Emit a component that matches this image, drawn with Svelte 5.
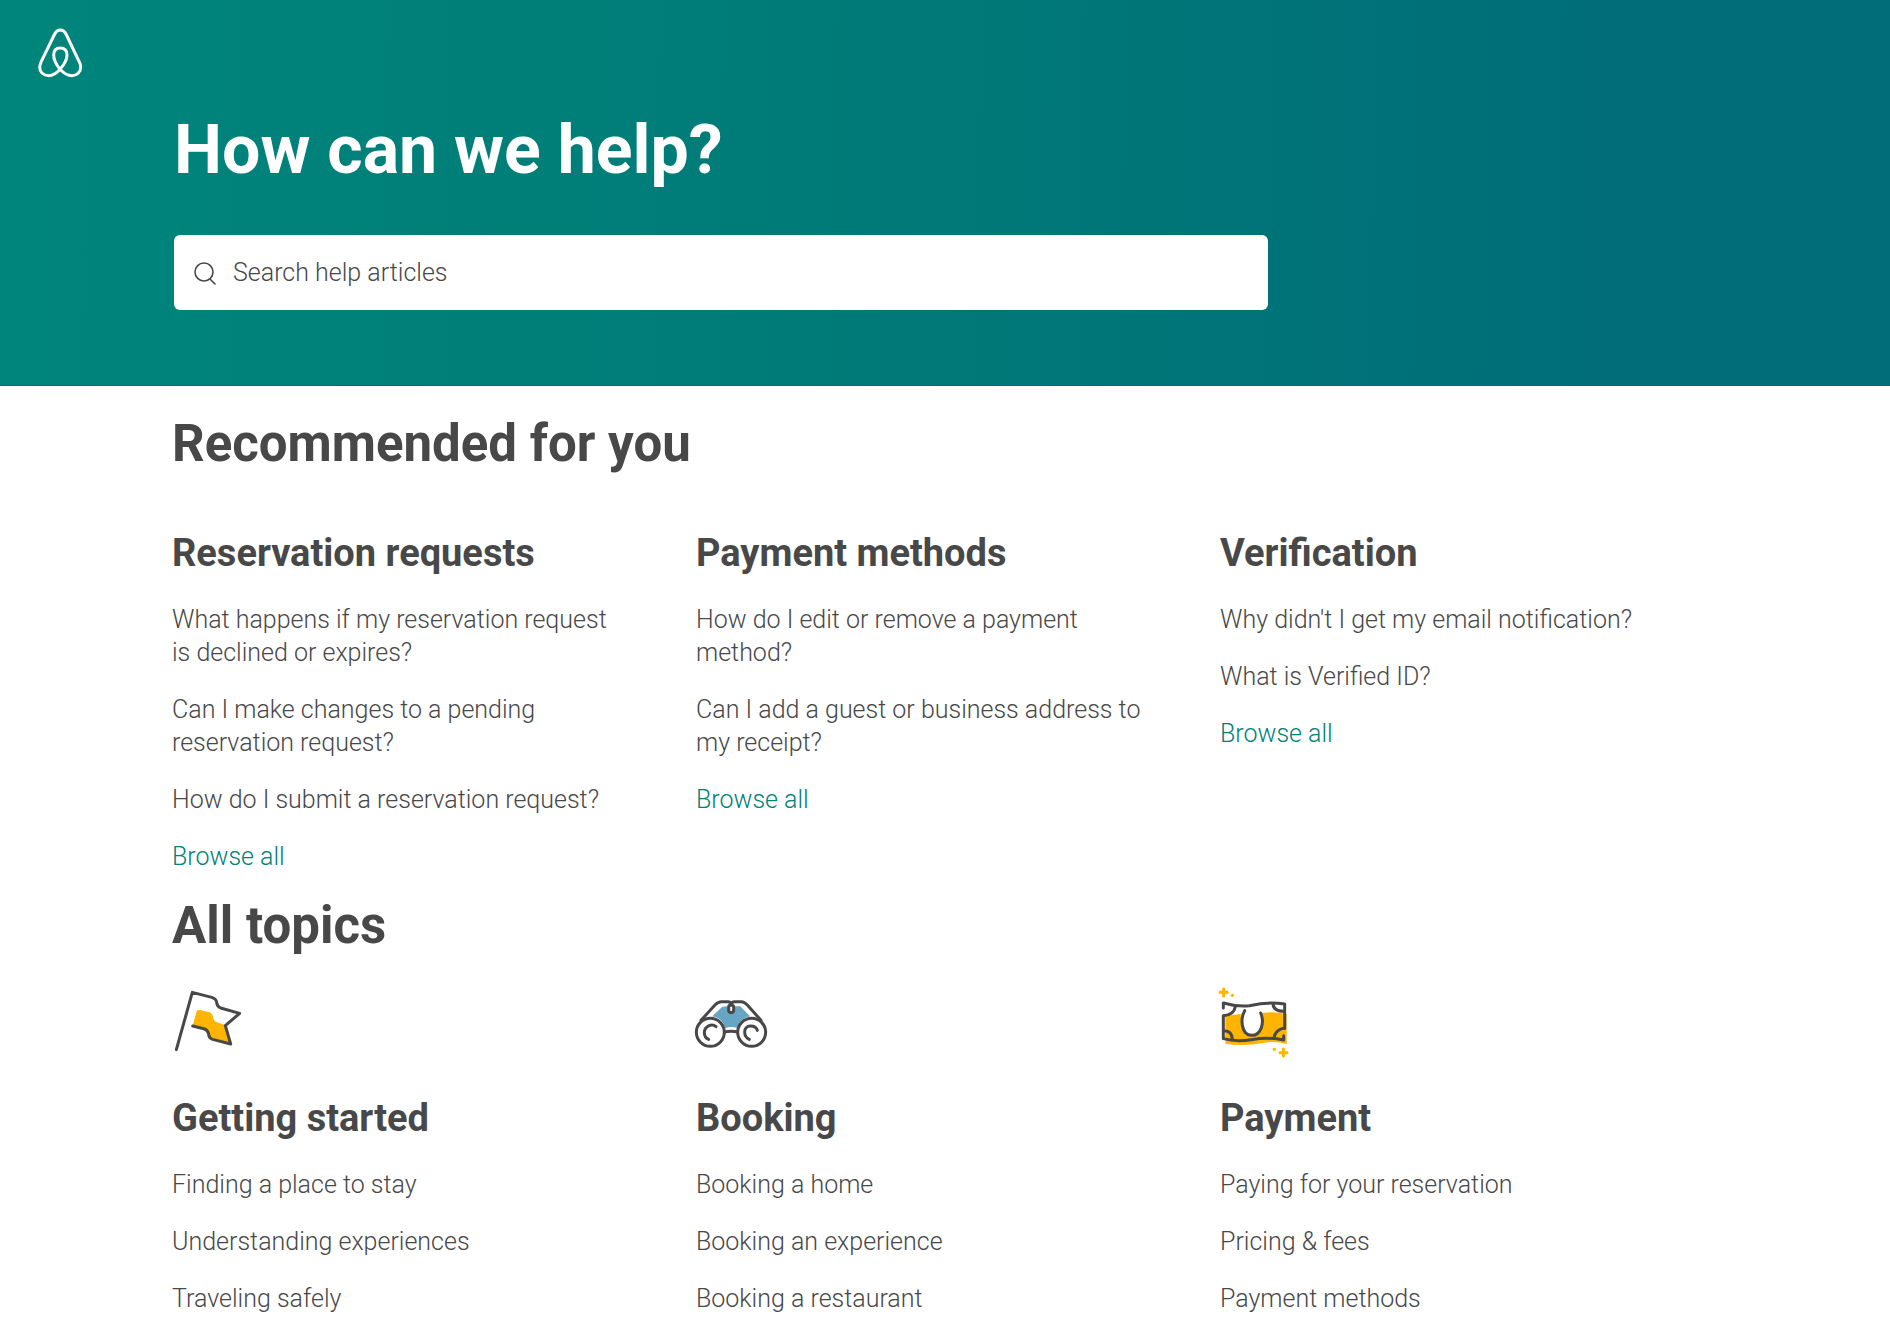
<script>
	const recommended = [
		{
			title: 'Reservation requests',
			links: [
				'What happens if my reservation request is declined or expires?',
				'Can I make changes to a pending reservation request?',
				'How do I submit a reservation request?'
			]
		},
		{
			title: 'Payment methods',
			links: [
				'How do I edit or remove a payment method?',
				'Can I add a guest or business address to my receipt?'
			]
		},
		{
			title: 'Verification',
			links: ["Why didn't I get my email notification?", 'What is Verified ID?']
		}
	];

	const topics = [
		{
			icon: 'flag',
			title: 'Getting started',
			links: ['Finding a place to stay', 'Understanding experiences', 'Traveling safely']
		},
		{
			icon: 'binoculars',
			title: 'Booking',
			links: ['Booking a home', 'Booking an experience', 'Booking a restaurant']
		},
		{
			icon: 'bill',
			title: 'Payment',
			links: ['Paying for your reservation', 'Pricing & fees', 'Payment methods']
		}
	];

	let query = '';
</script>

<header>
	<a class="logo" href="/" aria-label="Airbnb homepage">
		<svg viewBox="54 52 135 150" width="45" height="50">
			<path
				d="M120 176C106 159 101 144 101 133C101 119 109 112 121 112C133 112 141 119 141 133C141 144 135 159 120 176C109 189 98 195 86 195C70 195 59 184 59 170C59 164 61 159 64 152L104 70C108 62 113 58 121 58C129 58 134 62 138 70L177 152C181 159 182 164 182 170C182 184 171 195 156 195C143 195 132 189 120 176Z"
			/>
		</svg>
	</a>
	<div class="hero">
		<h1>How can we help?</h1>
		<form class="search" role="search" on:submit|preventDefault>
			<label for="query" aria-label="Search">
				<svg viewBox="0 0 24 24" width="24" height="24">
					<circle cx="10" cy="11" r="9" />
					<path d="M16 18l5 5" />
				</svg>
			</label>
			<input id="query" type="text" placeholder="Search help articles" bind:value={query} />
		</form>
	</div>
</header>

<main>
	<h2>Recommended for you</h2>
	<div class="columns recommended">
		{#each recommended as section}
			<section>
				<h3>{section.title}</h3>
				<ul>
					{#each section.links as link}
						<li><a href="#article">{link}</a></li>
					{/each}
					<li><a class="browse" href="#browse">Browse all</a></li>
				</ul>
			</section>
		{/each}
	</div>

	<h2>All topics</h2>
	<div class="columns topics">
		{#each topics as topic}
			<section>
				{#if topic.icon === 'flag'}
					<svg class="icon" viewBox="36 51 216 216">
						<path
							class="yellow"
							d="M110 124Q113 119 120 120L148 127Q158 130 159 142Q161 154 170 157L196 165L211 222L158 208Q147 204 146 193Q144 181 134 178L98 167Z"
						/>
						<path
							d="M49 239L97 67L155 82Q169 86 170 97Q171 109 182 114L239 130L196 167L212 222L158 208Q147 204 146 193Q144 181 134 177L98 168"
						/>
					</svg>
				{:else if topic.icon === 'binoculars'}
					<svg class="icon" viewBox="48 21 216 216">
						<path
							class="blue"
							d="M127 80L143 79Q142 98 153 98Q164 98 163 79L181 79L210 109Q180 115 171 143L158 141H149L135 144Q130 115 97 109Z"
						/>
						<path
							d="M63 121L105 75Q115 65 124 65H145Q153 66 153 75M243 121L202 75Q193 65 184 65H163Q153 66 153 75"
						/>
						<path d="M146 81V91Q146 98 153 98Q161 98 161 91V81Q161 75 153 75Q146 75 146 81Z" />
						<circle cx="91" cy="157" r="42" />
						<circle cx="215" cy="157" r="42" />
						<path d="M133 156Q153 151 173 156" />
						<path d="M108 140C96 129 73 138 73 158Q73 172 86 178M232 151C226 134 194 132 194 156Q194 172 208 178" />
					</svg>
				{:else}
					<svg class="icon" viewBox="45 36 216 216">
						<path
							class="yellow"
							d="M61 119Q84 122 107 116Q109 174 139 174Q168 174 171 114Q206 109 245 117V207Q210 197 174 204Q115 215 61 206Z"
						/>
						<path
							class="paper"
							d="M119 107C105 132 109 181 140 181C169 181 179 142 167 114Z"
						/>
						<path
							d="M55 99V84Q91 95 133 92Q187 79 239 87V116M55 123V191Q95 201 139 194Q191 185 236 195V182M239 109V160"
						/>
						<path
							d="M91 95Q87 119 55 122M204 86Q205 110 239 109M57 167Q81 167 82 193M207 190Q209 164 239 159"
						/>
						<path d="M119 107C105 132 109 181 140 181C169 181 179 142 167 114" />
						<path class="spark" d="M56 42V63M45 52H67M235 222V243M225 233H246" />
						<circle class="yellow" cx="82" cy="61" r="5" />
						<circle class="yellow" cx="208" cy="223" r="5" />
					</svg>
				{/if}
				<h3>{topic.title}</h3>
				<ul>
					{#each topic.links as link}
						<li><a href="#topic">{link}</a></li>
					{/each}
				</ul>
			</section>
		{/each}
	</div>
</main>

<style>
	:global(body) {
		margin: 0;
		background: #fff;
		color: #484848;
		font-family: Roboto, 'Liberation Sans', sans-serif;
		font-size: 25px;
		font-weight: 300;
		line-height: 33px;
	}
	header {
		padding: 28px 38px 75px;
		background: linear-gradient(91deg, #00857b, #007c78 40%, #006d78 86%);
		border-bottom: 1px solid #00706f;
	}
	.logo {
		display: block;
		width: 45px;
		height: 50px;
	}
	.logo svg {
		display: block;
		fill: none;
		stroke: #fff;
		stroke-width: 9;
		stroke-linejoin: round;
	}
	.hero {
		padding: 0 136px;
	}
	h1 {
		margin: 26px 0 39px;
		color: #fff;
		font-size: 68px;
		font-weight: 700;
		line-height: 92px;
	}
	.search {
		display: flex;
		align-items: center;
		max-width: 1094px;
		height: 75px;
		box-sizing: border-box;
		padding: 0 20px;
		gap: 15px;
		border-radius: 6px;
		background: #fff;
	}
	.search label {
		display: flex;
	}
	.search svg {
		fill: none;
		stroke: #484848;
		stroke-width: 1.6;
		stroke-linecap: round;
	}
	.search input {
		flex: 1;
		min-width: 0;
		padding: 0;
		border: none;
		outline: none;
		background: none;
		color: #484848;
		font: inherit;
	}
	.search input::placeholder {
		color: #484848;
		opacity: 1;
	}
	main {
		padding: 25px 172px;
	}
	h2 {
		margin: 0;
		font-size: 51px;
		font-weight: 700;
		line-height: 66px;
	}
	h3 {
		margin: 0 0 26px;
		font-size: 38px;
		font-weight: 700;
		line-height: 48px;
	}
	.columns {
		display: grid;
		grid-template-columns: repeat(3, 1fr);
		gap: 26px;
	}
	.recommended {
		margin: 52px 0 20px;
	}
	.topics {
		margin-top: 28px;
	}
	section {
		padding-right: 48px;
	}
	ul {
		display: flex;
		flex-direction: column;
		gap: 24px;
		margin: 0;
		padding: 0;
		list-style: none;
	}
	a {
		color: inherit;
		text-decoration: none;
	}
	.browse {
		color: #008276;
	}
	.icon {
		display: block;
		width: 72px;
		height: 72px;
		margin-bottom: 35px;
		overflow: visible;
		fill: none;
		stroke: #484848;
		stroke-width: 9;
		stroke-linecap: round;
		stroke-linejoin: round;
	}
	.icon .yellow {
		fill: #ffb400;
		stroke: none;
	}
	.icon .blue {
		fill: #67a5c4;
		stroke: none;
	}
	.icon .paper {
		fill: #fff;
		stroke: none;
	}
	.icon .spark {
		stroke: #ffb400;
	}
</style>
